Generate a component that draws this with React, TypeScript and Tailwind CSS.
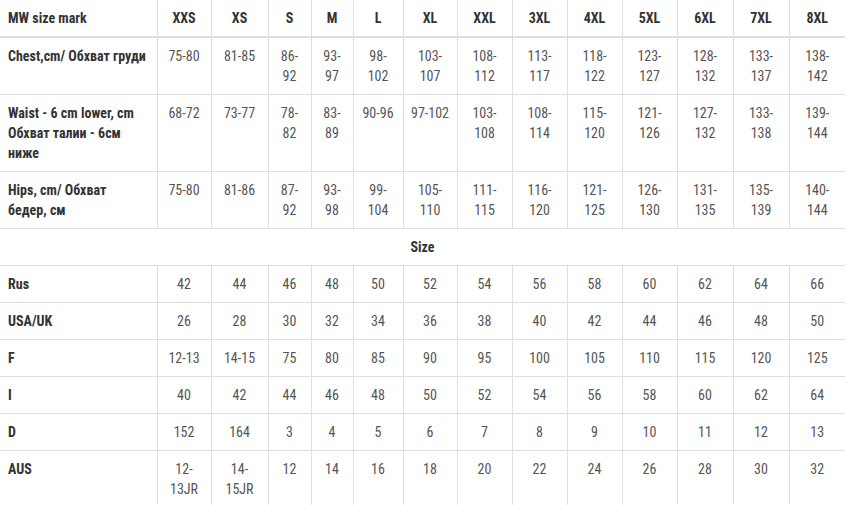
import React from "react";

const sizes = ["XXS", "XS", "S", "M", "L", "XL", "XXL", "3XL", "4XL", "5XL", "6XL", "7XL", "8XL"];
const widths = [157, 54, 57, 43, 42, 50, 54, 55, 55, 55, 55, 56, 56, 56];

const measures = [
  {
    label: "Chest,cm/ Обхват груди",
    values: ["75-80", "81-85", "86-\n92", "93-\n97", "98-\n102", "103-\n107", "108-\n112", "113-\n117", "118-\n122", "123-\n127", "128-\n132", "133-\n137", "138-\n142"],
  },
  {
    label: "Waist - 6 cm lower, cm\nОбхват талии - 6см\nниже",
    values: ["68-72", "73-77", "78-\n82", "83-\n89", "90-96", "97-102", "103-\n108", "108-\n114", "115-\n120", "121-\n126", "127-\n132", "133-\n138", "139-\n144"],
  },
  {
    label: "Hips, cm/ Обхват\nбедер, см",
    values: ["75-80", "81-86", "87-\n92", "93-\n98", "99-\n104", "105-\n110", "111-\n115", "116-\n120", "121-\n125", "126-\n130", "131-\n135", "135-\n139", "140-\n144"],
  },
];

const conversions = [
  { label: "Rus", values: ["42", "44", "46", "48", "50", "52", "54", "56", "58", "60", "62", "64", "66"] },
  { label: "USA/UK", values: ["26", "28", "30", "32", "34", "36", "38", "40", "42", "44", "46", "48", "50"] },
  { label: "F", values: ["12-13", "14-15", "75", "80", "85", "90", "95", "100", "105", "110", "115", "120", "125"] },
  { label: "I", values: ["40", "42", "44", "46", "48", "50", "52", "54", "56", "58", "60", "62", "64"] },
  { label: "D", values: ["152", "164", "3", "4", "5", "6", "7", "8", "9", "10", "11", "12", "13"] },
  { label: "AUS", values: ["12-\n13JR", "14-\n15JR", "12", "14", "16", "18", "20", "22", "24", "26", "28", "30", "32"] },
];

function DataRow({ label, values }: { label: string; values: string[] }) {
  return (
    <tr className="border-t border-[#dedede]">
      <th className="px-2 py-2 text-left align-top font-bold text-[#333] whitespace-pre-line">{label}</th>
      {values.map((v, i) => (
        <td
          key={i}
          className="border-l border-[#dedede] px-1 py-2 text-center align-top text-[#555] whitespace-pre-line"
        >
          {v}
        </td>
      ))}
    </tr>
  );
}

export default function App() {
  return (
    <div
      className="w-[845px] bg-white text-[14px] leading-5"
      style={{ fontFamily: '"Roboto Condensed", Roboto, "Liberation Sans", sans-serif' }}
    >
      <table className="w-[845px] table-fixed border-collapse">
        <colgroup>
          {widths.map((w, i) => (
            <col key={i} style={{ width: w }} />
          ))}
        </colgroup>
        <thead>
          <tr className="border-b-2 border-[#dedede]">
            <th className="px-2 py-2 text-left font-bold text-[#333]">MW size mark</th>
            {sizes.map((s) => (
              <th key={s} className="border-l border-[#dedede] px-1 py-2 text-center font-bold text-[#333]">
                {s}
              </th>
            ))}
          </tr>
        </thead>
        <tbody>
          {measures.map((r) => (
            <DataRow key={r.label} label={r.label} values={r.values} />
          ))}
          <tr className="border-t border-[#dedede]">
            <th colSpan={14} className="px-2 py-2 text-center font-bold text-[#333]">
              Size
            </th>
          </tr>
          {conversions.map((r) => (
            <DataRow key={r.label} label={r.label} values={r.values} />
          ))}
        </tbody>
      </table>
    </div>
  );
}
